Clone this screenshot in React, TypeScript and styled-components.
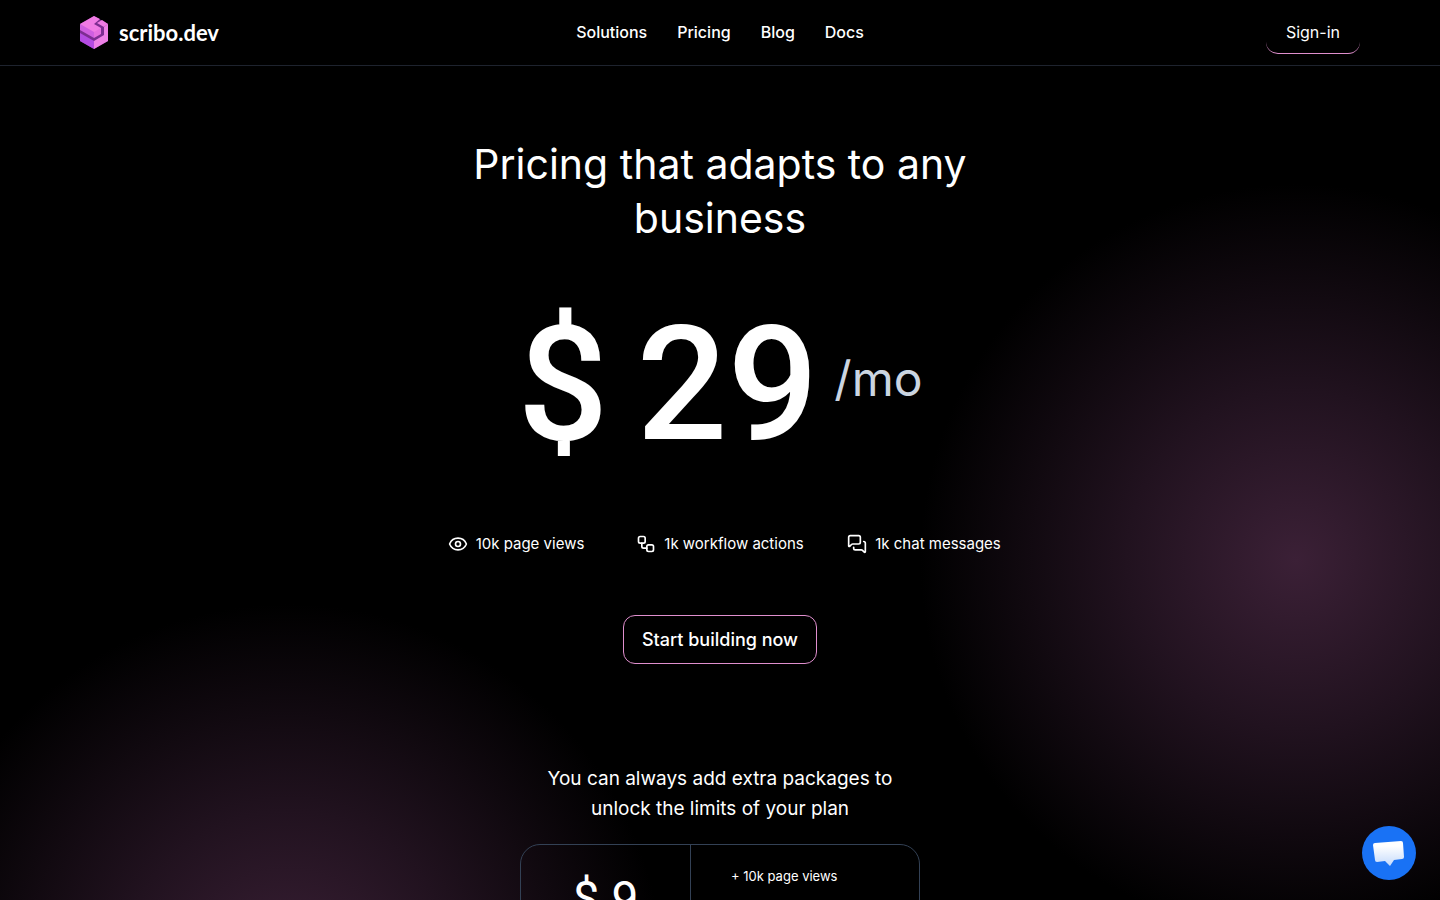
import React from "react";
import styled, { createGlobalStyle } from "styled-components";
import { Eye, MessagesSquare, Workflow } from "lucide-react";

const GlobalStyle = createGlobalStyle`
  *, *::before, *::after { box-sizing: border-box; }
  body {
    margin: 0;
    background: #000;
    color: #fff;
    font-family: Inter, "Liberation Sans", sans-serif;
    font-size: 15px;
    line-height: 24px;
  }
`;

const Page = styled.div`
  display: flex;
  flex-direction: column;
  height: 100vh;
  overflow-y: auto;
  scrollbar-width: none;
  background:
    radial-gradient(circle 376px at 90% 560px, #3b2036 0%, #21121f 45%, transparent 100%),
    radial-gradient(circle 376px at 20% 980px, #3b2036 0%, #21121f 45%, transparent 100%),
    #000;
`;

const Header = styled.header`
  display: grid;
  grid-template-columns: 1fr auto 1fr;
  align-items: center;
  flex: none;
  height: 66px;
  padding: 0 80px;
  background: #000;
  border-bottom: 1px solid #1e232e;
`;

const Brand = styled.a`
  display: flex;
  align-items: center;
  gap: 10px;
  color: #fff;
  font-family: Lato, sans-serif;
  font-size: 22px;
  font-weight: 700;
  text-decoration: none;
`;

const Nav = styled.nav`
  display: flex;
  gap: 30px;
  padding-bottom: 2px;
`;

const NavLink = styled.a`
  color: #fff;
  font-size: 16px;
  font-weight: 500;
  text-decoration: none;
`;

const SignIn = styled.a`
  justify-self: end;
  padding: 8px 20px 9px;
  border-bottom: 1px solid #e08fce;
  border-radius: 12px;
  color: #fff;
  font-size: 16px;
  text-decoration: none;
`;

const Main = styled.main`
  display: flex;
  flex-direction: column;
  align-items: center;
  flex: none;
  padding: 71px 20px 80px;
`;

const Title = styled.h1`
  max-width: 560px;
  margin: 0;
  font-size: 41px;
  font-weight: 400;
  line-height: 54px;
  text-align: center;
`;

const Price = styled.p`
  display: flex;
  align-items: center;
  gap: 16px;
  margin: 40px 0 0;
  line-height: 200px;
`;

const Amount = styled.span`
  display: flex;
  gap: 28px;
  font-family: Roboto, sans-serif;
  font-size: 160px;
  font-weight: 500;
`;

const Period = styled.span`
  color: #cbd5e1;
  font-size: 48px;
  line-height: 60px;
  padding-bottom: 12px;
`;

const Features = styled.ul`
  display: grid;
  grid-template-columns: repeat(3, 204px);
  justify-items: center;
  margin: 47px 0 0;
  padding: 0;
  list-style: none;
`;

const Feature = styled.li`
  display: flex;
  align-items: center;
  gap: 8px;
`;

const StartButton = styled.button`
  height: 49px;
  margin-top: 59px;
  padding: 0 18px;
  border: 1px solid #e08fce;
  border-radius: 12px;
  background: transparent;
  color: #fff;
  font: 500 18px/24px Inter, sans-serif;
`;

const ExtraText = styled.p`
  max-width: 380px;
  margin: 100px 0 20px;
  font-size: 19px;
  line-height: 30px;
  text-align: center;
`;

const Package = styled.section`
  display: grid;
  grid-template-columns: 170px 1fr;
  width: 100%;
  max-width: 400px;
  border: 1px solid #334155;
  border-radius: 20px;
`;

const PackagePrice = styled.div`
  padding: 24px 0;
  border-right: 1px solid #334155;
  font-family: Roboto, sans-serif;
  font-size: 48px;
  line-height: 60px;
  text-align: center;
`;

const PackageList = styled.ul`
  margin: 0;
  padding: 16px 40px;
  font-size: 13px;
  line-height: 30px;
  list-style: none;
`;

const ChatButton = styled.button`
  position: fixed;
  right: 24px;
  bottom: 20px;
  display: grid;
  place-items: center;
  width: 54px;
  height: 54px;
  padding: 0;
  border: 0;
  border-radius: 50%;
  background: #1972f5;
`;

const features = [
  { icon: Eye, label: "10k page views" },
  { icon: Workflow, label: "1k workflow actions" },
  { icon: MessagesSquare, label: "1k chat messages" },
];

const Logo = () => (
  <svg width="29" height="34" viewBox="0 0 29 34" aria-hidden="true">
    <path d="M14 0 28 8v17L14 33 0 25V8Z" fill="#7c2d91" />
    <path d="M0 8 14 0l6 3-6 5 7 4v4l-7 4Z" fill="#f07be4" />
    <path d="M0 8l14 8v6L0 14Z" fill="#cf5fe0" />
    <path d="M14 16l7-4v6l-7 4Z" fill="#e56fdf" />
    <path d="M17 7l5-3 6 4-4 3Z" fill="#f07be4" />
    <path d="M24 11l4-3v17L14 33v-8l10-6Z" fill="#ee80e6" />
    <path d="M0 17l14 8v8L0 25Z" fill="#b44be2" />
  </svg>
);

const ChatIcon = () => (
  <svg width="32" height="28" viewBox="0 0 32 28" aria-hidden="true">
    <defs>
      <linearGradient id="bubble" x1="0" y1="0" x2="0" y2="1">
        <stop offset="0.2" stopColor="#fff" />
        <stop offset="1" stopColor="#c4dafc" />
      </linearGradient>
    </defs>
    <path d="M2 4 28 2q2 0 2 2l1 14q0 2-2 2l-8 1-4 6-5-5-8 1q-2 0-2-2L0 6q0-2 2-2Z" fill="url(#bubble)" />
  </svg>
);

export default function App() {
  return (
    <Page>
      <GlobalStyle />
      <Header>
        <Brand href="#"><Logo />scribo.dev</Brand>
        <Nav>
          {["Solutions", "Pricing", "Blog", "Docs"].map((name) => (
            <NavLink key={name} href="#">{name}</NavLink>
          ))}
        </Nav>
        <SignIn href="#">Sign-in</SignIn>
      </Header>
      <Main>
        <Title>Pricing that adapts to any business</Title>
        <Price>
          <Amount><span>$</span> <span>29</span></Amount>
          <Period>/mo</Period>
        </Price>
        <Features>
          {features.map(({ icon: Icon, label }) => (
            <Feature key={label}><Icon size={20} />{label}</Feature>
          ))}
        </Features>
        <StartButton type="button">Start building now</StartButton>
        <ExtraText>You can always add extra packages to unlock the limits of your plan</ExtraText>
        <Package>
          <PackagePrice>$ 9</PackagePrice>
          <PackageList>
            <li>+ 10k page views</li>
            <li>+ 1k workflow actions</li>
          </PackageList>
        </Package>
      </Main>
      <ChatButton type="button" aria-label="Open chat"><ChatIcon /></ChatButton>
    </Page>
  );
}
